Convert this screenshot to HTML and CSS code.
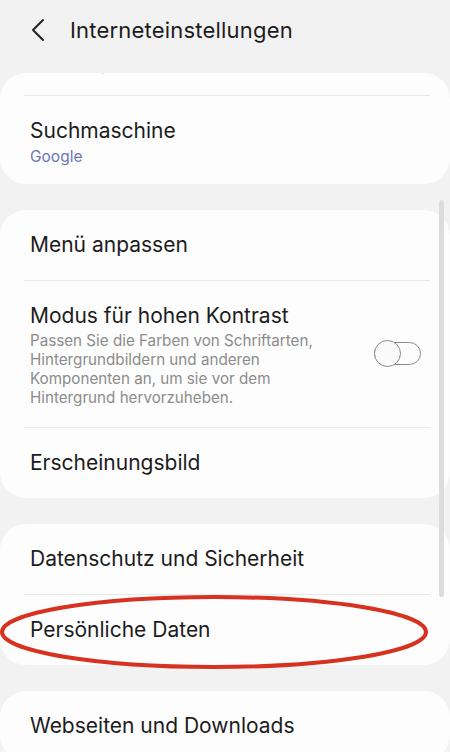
FILE: index.html
```html
<!DOCTYPE html>
<html lang="de">
<head>
  <meta charset="UTF-8" />
  <meta name="viewport" content="width=device-width, initial-scale=1.0"/>
  <title>Interneteinstellungen</title>
  <link rel="stylesheet" href="styles.css">
</head>
<body>
  <div class="screen">
    <header class="appbar">
      <svg class="back" width="14" height="24" viewBox="0 0 14 24">
        <path d="M12 2 L2 12 L12 22" fill="none" stroke="#222" stroke-width="2" stroke-linecap="round" stroke-linejoin="round"/>
      </svg>
      <h1>Interneteinstellungen</h1>
    </header>

    <main class="list">
      <section class="card">
        <div class="peek"><span>Samsung Internet</span></div>
        <div class="sep"></div>
        <div class="row two">
          <p class="title">Suchmaschine</p>
          <p class="value">Google</p>
        </div>
      </section>

      <section class="card">
        <div class="row"><p class="title">Menü anpassen</p></div>
        <div class="sep"></div>
        <div class="row switch">
          <div class="text">
            <p class="title">Modus für hohen Kontrast</p>
            <p class="desc">Passen Sie die Farben von Schriftarten, Hintergrundbildern und anderen Komponenten an, um sie vor dem Hintergrund hervorzuheben.</p>
          </div>
          <div class="toggle"></div>
        </div>
        <div class="sep"></div>
        <div class="row"><p class="title">Erscheinungsbild</p></div>
      </section>

      <section class="card">
        <div class="row"><p class="title">Datenschutz und Sicherheit</p></div>
        <div class="sep"></div>
        <div class="row"><p class="title">Persönliche Daten</p></div>
      </section>

      <section class="card">
        <div class="row"><p class="title">Webseiten und Downloads</p></div>
      </section>
    </main>

    <div class="scrollbar"></div>

    <!-- red marker drawn over the screenshot -->
    <svg class="marker" width="450" height="80" viewBox="0 0 450 80">
      <ellipse cx="214" cy="40" rx="212" ry="35" fill="none" stroke="#d7311f" stroke-width="4"/>
    </svg>
  </div>
</body>
</html>
```

FILE: styles.css
```css
body {
  margin: 0;
  padding: 0;
  background-color: #f2f2f2;
  font-family: Inter, Roboto, "Noto Sans", Arial, sans-serif;
  color: #1c1c1c;
}
p, h1 {
  margin: 0;
}
.screen {
  position: relative;
  width: 450px;
  height: 752px;
  overflow: hidden;
}
.appbar {
  height: 60px;
  display: flex;
  align-items: center;
  padding-left: 31px;
}
.appbar h1 {
  font-size: 22px;
  font-weight: 400;
  letter-spacing: 0.2px;
  margin-left: 25px;
  color: #1c1c1c;
}
.list {
  padding-top: 13px;
}
.card {
  background: #fdfdfd;
  border-radius: 26px;
  margin-bottom: 26px;
  overflow: hidden;
}
.peek {
  height: 22px;
  overflow: hidden;
  padding-left: 37px;
}
.peek span {
  display: block;
  margin-top: -19px;
  font-size: 16px;
  line-height: 20px;
  color: #6b73b8;
}
.sep {
  height: 1px;
  margin: 0 20px 0 24px;
  background: #e8e8e8;
}
.row {
  min-height: 30px;
  padding: 20px 30px;
  display: flex;
  flex-direction: column;
  justify-content: center;
}
.title {
  font-size: 21px;
  line-height: 30px;
}
.row.two {
  padding-bottom: 18px;
}
.value {
  font-size: 15.5px;
  line-height: 18px;
  margin-top: 2px;
  color: #6b73b8;
}
.row.switch {
  flex-direction: row;
  align-items: center;
  gap: 24px;
  padding-right: 29px;
}
.switch .text {
  flex: 1;
  padding-right: 12px;
}
.desc {
  font-size: 15.2px;
  line-height: 19px;
  color: #8c8c8c;
}
.toggle {
  position: relative;
  width: 47px;
  height: 28px;
  flex-shrink: 0;
}
.toggle::before {
  content: "";
  position: absolute;
  left: 0;
  top: 2px;
  width: 45px;
  height: 21px;
  border: 1.5px solid #8a8a8a;
  border-radius: 13px;
}
.toggle::after {
  content: "";
  position: absolute;
  left: 0;
  top: 0;
  width: 25px;
  height: 25px;
  border: 1.5px solid #8a8a8a;
  border-radius: 50%;
  background: #fafafa;
}
.scrollbar {
  position: absolute;
  left: 439px;
  top: 200px;
  width: 5px;
  height: 397px;
  border-radius: 3px;
  background: #dcdcdc;
}
.marker {
  position: absolute;
  left: 0;
  top: 592px;
}
```
